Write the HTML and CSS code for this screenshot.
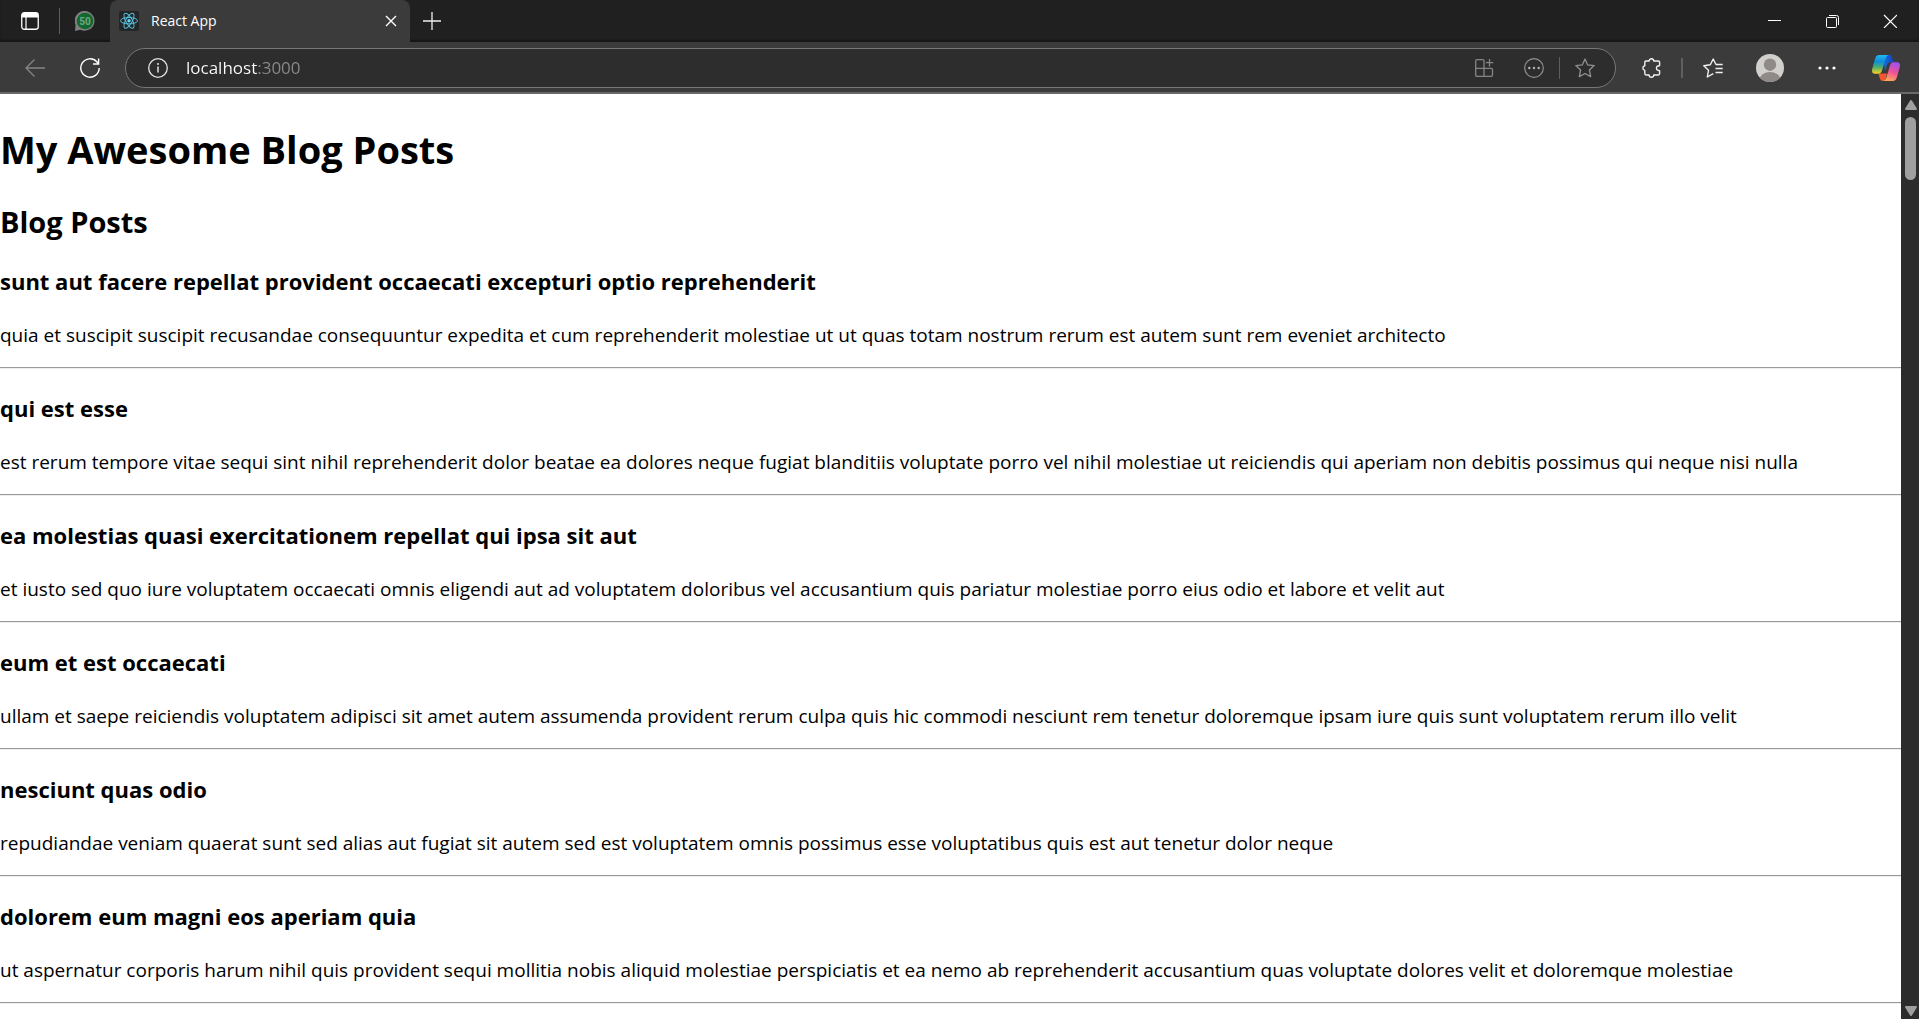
FILE: index.html
```html
<!DOCTYPE html>
<html lang="en">
<head>
<meta charset="utf-8">
<title>React App</title>
<link rel="stylesheet" href="styles.css">
</head>
<body>
<header class="browser">
  <div class="tabstrip">
    <button class="icon-btn tab-actions" aria-label="Tab actions menu">
      <svg width="18" height="18" viewBox="0 0 18 18"><rect x=".75" y=".75" width="16.5" height="16.5" rx="2.5" fill="none" stroke="#fff" stroke-width="1.3"/><path d="M1 2.5Q1 .8 3 .8H15Q17 .8 17 2.5V5.5H1Z" fill="#fff"/><path d="M5 5V17" stroke="#fff" stroke-width="1.2"/></svg>
    </button>
    <span class="divider strip-divider"></span>
    <button class="icon-btn pinned-tab" aria-label="Pinned tab, 50 unread">
      <svg width="20" height="20" viewBox="0 0 20 20"><path d="M0 20L.6 14A9.9 9.9 0 1 1 5.2 18.7Z" fill="#808080"/><circle cx="10" cy="10" r="8.3" fill="#12692f"/><text x="10" y="13.5" class="badge-text">50</text></svg>
    </button>
    <div class="tab">
      <svg class="favicon" width="20" height="20" viewBox="0 0 20 20"><rect width="20" height="20" rx="2" fill="#232527"/><g fill="none" stroke="#58bfda" stroke-width="1"><ellipse cx="10" cy="9.7" rx="8.5" ry="3.2"/><ellipse cx="10" cy="9.7" rx="8.5" ry="3.2" transform="rotate(60 10 9.7)"/><ellipse cx="10" cy="9.7" rx="8.5" ry="3.2" transform="rotate(120 10 9.7)"/></g><circle cx="10" cy="9.7" r="1.7" fill="#61dafb"/></svg>
      <span class="tab-title">React App</span>
      <button class="icon-btn tab-close" aria-label="Close tab"><svg width="12" height="12" viewBox="0 0 12 12"><path d="M1 1L11 11M11 1L1 11" stroke="#fff" stroke-width="1.4"/></svg></button>
    </div>
    <button class="icon-btn new-tab" aria-label="New tab"><svg width="18" height="18" viewBox="0 0 18 18"><path d="M9 0V18M0 9H18" stroke="#eee" stroke-width="1.3"/></svg></button>
    <div class="window-controls">
      <button class="icon-btn window-btn" aria-label="Minimize"><svg width="14" height="14" viewBox="0 0 14 14"><path d="M1 6.5H14" stroke="#fff"/></svg></button>
      <button class="icon-btn window-btn" aria-label="Restore"><svg width="14" height="14" viewBox="0 0 14 14"><rect x="1.5" y="3.5" width="10" height="10" rx="1" fill="none" stroke="#fff"/><path d="M4 1.5H11.5Q13.5 1.5 13.5 3.5V11" fill="none" stroke="#fff"/></svg></button>
      <button class="icon-btn window-btn" aria-label="Close"><svg width="14" height="14" viewBox="0 0 14 14"><path d="M1 1L14 14M14 1L1 14" stroke="#fff" stroke-width="1.2"/></svg></button>
    </div>
  </div>
  <div class="toolbar">
    <button class="icon-btn nav-btn" aria-label="Back"><svg width="20" height="20" viewBox="0 0 20 20"><path d="M20 10H.8M9.5 1.5L1 10L9.5 18.5" fill="none" stroke="#858585" stroke-width="1.3"/></svg></button>
    <button class="icon-btn nav-btn" aria-label="Refresh"><svg width="20" height="20" viewBox="0 0 20 20"><path d="M19.2 10A9.2 9.2 0 1 1 16.8 3.8L18.5 5.8M18.6 .5V6H13" fill="none" stroke="#fff" stroke-width="1.4"/></svg></button>
    <div class="omnibox">
      <button class="icon-btn site-info" aria-label="View site information"><svg width="20" height="20" viewBox="0 0 20 20"><circle cx="10" cy="10" r="9.3" fill="none" stroke="#e2e2e2" stroke-width="1.3"/><path d="M10 8.5V14.5" stroke="#e2e2e2" stroke-width="1.5"/><circle cx="10" cy="6" r="1" fill="#e2e2e2"/></svg></button>
      <input class="address" type="text" value="localhost:3000" aria-label="Address and search bar">
      <button class="icon-btn tool-btn" aria-label="App available"><svg width="20" height="20" viewBox="0 0 20 20"><path d="M1.7 3Q1.7 1.7 3 1.7H8.8Q10 1.7 10 3V10.3H17.2Q18.5 10.3 18.5 11.6V17Q18.5 18.3 17.2 18.3H3Q1.7 18.3 1.7 17ZM1.7 10.3H10V18.3M15.5 1V8.5M11.8 4.7H19.3" fill="none" stroke="#858585" stroke-width="1.3"/></svg></button>
      <button class="icon-btn tool-btn more-info" aria-label="More page actions"><svg width="20" height="20" viewBox="0 0 20 20"><circle cx="10" cy="10" r="9.3" fill="none" stroke="#909090" stroke-width="1.2"/><g fill="#b5b5b5"><circle cx="5.3" cy="10" r="1.2"/><circle cx="10" cy="10" r="1.2"/><circle cx="14.7" cy="10" r="1.2"/></g></svg></button>
      <span class="divider omni-divider"></span>
      <button class="icon-btn tool-btn" aria-label="Add to favorites"><svg width="20" height="20" viewBox="0 0 20 20"><path d="M10 1L12.7 6.9L19.2 7.6L14.4 12L15.7 18.6L10 15.5L4.3 18.6L5.6 12L.8 7.6L7.3 6.9Z" fill="none" stroke="#909090" stroke-width="1.3" stroke-linejoin="round"/></svg></button>
    </div>
    <button class="icon-btn tool-btn" aria-label="Extensions"><svg width="20" height="20" viewBox="0 0 20 20"><path d="M2.8 4.2Q2.8 3 4 3H7.1A2.3 2.3 0 0 1 11.7 3H16.3Q17.6 3 17.6 4.2V7.4Q17.3 8.2 16.3 7.8A2.4 2.4 0 0 0 16.3 12.5Q17.3 12 17.6 13V15.6Q17.6 17 16.3 17H11.7A2.3 2.3 0 0 1 7.1 17H4.1Q2.8 17 2.8 15.6V12.4A2.4 2.4 0 0 1 2.8 7.7Z" fill="none" stroke="#f0f0f0" stroke-width="1.4" stroke-linejoin="round"/></svg></button>
    <span class="divider bar-divider"></span>
    <button class="icon-btn tool-btn" aria-label="Favorites"><svg width="20" height="20" viewBox="0 0 20 20"><path d="M19.7 6.5H13L10.2 1L7.3 6.8L.8 7.8L5.5 12.3L4.3 19L10.3 15.7M12.5 10.5H19.7M12.5 14.5H19.7" fill="none" stroke="#f0f0f0" stroke-width="1.4" stroke-linejoin="round"/></svg></button>
    <button class="icon-btn tool-btn profile" aria-label="Profile"><svg width="28" height="28" viewBox="0 0 28 28"><clipPath id="face"><circle cx="14" cy="14" r="14"/></clipPath><g clip-path="url(#face)"><rect width="28" height="28" fill="#d2d0cd"/><circle cx="14" cy="10.7" r="6.2" fill="#8f8a87"/><ellipse cx="14" cy="25.5" rx="10.3" ry="7.5" fill="#8f8a87"/></g></svg></button>
    <button class="icon-btn tool-btn settings" aria-label="Settings and more"><svg width="18" height="4" viewBox="0 0 18 4"><g fill="#fff"><circle cx="2" cy="2" r="1.6"/><circle cx="9" cy="2" r="1.6"/><circle cx="16" cy="2" r="1.6"/></g></svg></button>
    <button class="icon-btn tool-btn copilot" aria-label="Copilot">
      <svg width="28" height="26" viewBox="0 0 28 26"><defs>
        <linearGradient id="cool" x1="0" y1="0" x2="0" y2="1"><stop offset="0" stop-color="#22b8f4"/><stop offset=".35" stop-color="#0d8edb"/><stop offset=".65" stop-color="#4fae70"/><stop offset="1" stop-color="#ffd21c"/></linearGradient>
        <linearGradient id="warm" x1=".6" y1="0" x2=".3" y2="1"><stop offset="0" stop-color="#a050ee"/><stop offset=".5" stop-color="#ef5296"/><stop offset="1" stop-color="#ffac58"/></linearGradient>
        <linearGradient id="deep"><stop offset="0" stop-color="#1675df"/><stop offset="1" stop-color="#153fc8"/></linearGradient></defs>
        <path d="M11 0H17Q19.3 0 20 2.3L21.4 7.2H18Q16 7.2 15 10L13 16Z" fill="url(#deep)"/>
        <path d="M6.5 18.5H15L13 26H11Q8.5 26 7.8 23.5Z" fill="#f4572e"/>
        <path d="M7 0H16.5Q14.5 .5 13.7 3.2L10 15.5Q9 18.8 6 18.8H3Q-.8 18.8 .2 14L3 4Q4.2 0 7 0Z" fill="url(#cool)"/>
        <path d="M21 7.2H25Q28.8 7.2 27.8 11.8L25 22Q23.8 26 21 26H11.5Q13.5 25.5 14.3 22.8L18 10.5Q19 7.2 21 7.2Z" fill="url(#warm)"/></svg>
    </button>
  </div>
</header>
<div class="viewport">
  <main class="page">
    <h1>My Awesome Blog Posts</h1>
    <section>
      <h2>Blog Posts</h2>
      <article><h3>sunt aut facere repellat provident occaecati excepturi optio reprehenderit</h3><p>quia et suscipit suscipit recusandae consequuntur expedita et cum reprehenderit molestiae ut ut quas totam nostrum rerum est autem sunt rem eveniet architecto</p><hr></article>
      <article><h3>qui est esse</h3><p>est rerum tempore vitae sequi sint nihil reprehenderit dolor beatae ea dolores neque fugiat blanditiis voluptate porro vel nihil molestiae ut reiciendis qui aperiam non debitis possimus qui neque nisi nulla</p><hr></article>
      <article><h3>ea molestias quasi exercitationem repellat qui ipsa sit aut</h3><p>et iusto sed quo iure voluptatem occaecati omnis eligendi aut ad voluptatem doloribus vel accusantium quis pariatur molestiae porro eius odio et labore et velit aut</p><hr></article>
      <article><h3>eum et est occaecati</h3><p>ullam et saepe reiciendis voluptatem adipisci sit amet autem assumenda provident rerum culpa quis hic commodi nesciunt rem tenetur doloremque ipsam iure quis sunt voluptatem rerum illo velit</p><hr></article>
      <article><h3>nesciunt quas odio</h3><p>repudiandae veniam quaerat sunt sed alias aut fugiat sit autem sed est voluptatem omnis possimus esse voluptatibus quis est aut tenetur dolor neque</p><hr></article>
      <article><h3>dolorem eum magni eos aperiam quia</h3><p>ut aspernatur corporis harum nihil quis provident sequi mollitia nobis aliquid molestiae perspiciatis et ea nemo ab reprehenderit accusantium quas voluptate dolores velit et doloremque molestiae</p><hr></article>
    </section>
  </main>
  <div class="scrollbar" aria-hidden="true">
    <svg width="12" height="10" viewBox="0 0 12 10"><path d="M6 1L11 9H1Z" fill="#9f9f9f" stroke="#9f9f9f" stroke-width="2" stroke-linejoin="round"/></svg>
    <div class="thumb"></div>
    <svg class="arrow-down" width="12" height="10" viewBox="0 0 12 10"><path d="M6 9L11 1H1Z" fill="#9f9f9f" stroke="#9f9f9f" stroke-width="2" stroke-linejoin="round"/></svg>
  </div>
</div>
</body>
</html>
```
FILE: styles.css
```css
* { box-sizing: border-box; }

body {
  margin: 0;
  height: 100vh;
  display: flex;
  flex-direction: column;
  font-family: "Segoe UI", "Open Sans", "Noto Sans", sans-serif;
  color: #000;
  background: #fff;
  overflow: hidden;
}

.icon-btn {
  display: flex;
  align-items: center;
  justify-content: center;
  flex: none;
  padding: 0;
  border: 0;
  background: none;
}

.icon-btn svg { display: block; }

.divider { flex: none; background: #5f5f5f; }

.browser { flex: none; background: #3b3b3b; border-bottom: 2px solid #6b6868; }

/* Tab strip */
.tabstrip {
  display: flex;
  align-items: center;
  height: 42px;
  background: #202020;
  box-shadow: inset 0 -2px 2px #171717;
}

.tab-actions { width: 40px; height: 32px; margin-left: 10px; }
.strip-divider { width: 1px; height: 26px; margin: 0 9px; }
.pinned-tab { width: 32px; height: 32px; }
.badge-text {
  font: 700 10px Roboto, sans-serif;
  text-anchor: middle;
  fill: #74a584;
}

.tab {
  display: flex;
  align-items: center;
  width: 300px;
  height: 42px;
  margin-left: 9px;
  padding: 0 7px 0 9px;
  border-radius: 8px 8px 0 0;
  background: #3b3b3b;
}

.tab-title { flex: 1; margin-left: 12px; font-size: 14px; line-height: 20px; color: #fff; }
.tab-close { width: 24px; height: 24px; }
.new-tab { width: 36px; height: 32px; margin-left: 4px; }
.window-controls { display: flex; margin-left: auto; }
.window-btn { width: 58px; height: 42px; }

/* Toolbar */
.toolbar {
  display: flex;
  align-items: center;
  height: 50px;
  padding: 2px 13px 0 15px;
}

.nav-btn { width: 40px; height: 36px; margin-right: 15px; }

.omnibox {
  display: flex;
  align-items: center;
  flex: 1;
  min-width: 0;
  height: 40px;
  margin-right: 16px;
  padding-right: 10px;
  border: 1px solid #777;
  border-radius: 20px;
  background: #2d2d2d;
}

.site-info { width: 40px; height: 36px; margin-left: 12px; }

/* The host is bright and the port is dimmed behind it. */
.address {
  flex: 1;
  min-width: 0;
  height: 32px;
  margin-left: 8px;
  padding: 0 0 2px;
  border: 0;
  outline: 0;
  font-family: inherit;
  font-size: 17px;
  background: linear-gradient(90deg, #fff 71px, #8a8a8a 71px);
  -webkit-background-clip: text;
  background-clip: text;
  color: transparent;
}

.tool-btn { width: 40px; height: 36px; }
.more-info { margin-left: 10px; }
.omni-divider { width: 1px; height: 22px; margin: 0 5px; }
.bar-divider { width: 2px; height: 20px; margin: 0 10px 0 9px; }
.profile, .settings { margin-left: 17px; }
.copilot { margin-left: 19px; }

/* Page */
.viewport { display: flex; flex: 1; min-height: 0; }
.page { flex: 1; min-width: 0; overflow: hidden; }

h1 { margin: 28px 0 26px; font-size: 38px; line-height: 54px; }
h2 { margin: 26px 0 23px; font-size: 29px; line-height: 40px; }
h3 { margin: 23px 0 24px; font-size: 22px; line-height: 32px; }
p { margin: 20px 0 18px; font-size: 19px; line-height: 28px; }
hr {
  margin: 18px 0 0;
  border: 0;
  border-top: 1px solid #9a9a9a;
  border-bottom: 1px solid #eee;
}

.scrollbar {
  display: flex;
  flex: none;
  flex-direction: column;
  align-items: center;
  width: 18px;
  padding: 6px 0 3px 1px;
  background: #2c2c2c;
}

.thumb { width: 11px; height: 63px; margin-top: 7px; border-radius: 6px; background: #9f9f9f; }
.arrow-down { margin-top: auto; }
```
